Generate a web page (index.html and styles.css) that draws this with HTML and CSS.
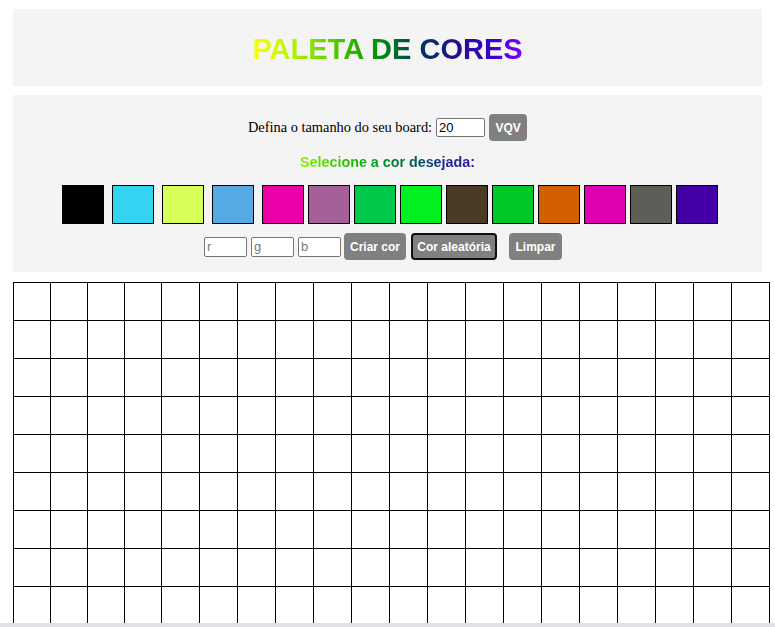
FILE: index.html
```html
<!DOCTYPE html>
<html lang="pt-BR">
<head>
<meta charset="utf-8">
<title>Paleta de Cores</title>
<link rel="stylesheet" href="styles.css">
</head>
<body>
<header class="header">
  <h1 class="title">PALETA DE CORES</h1>
</header>
<section class="controls">
  <div class="row-size">
    <label class="size-label" for="board-size">Defina o tamanho do seu board:</label>
    <input class="size-input" id="board-size" type="number" value="20">
    <button class="btn btn-vqv">VQV</button>
  </div>
  <p class="subtitle">Selecione a cor desejada:</p>
  <div class="palette">
    <div class="color wide" style="background:#000000"></div>
    <div class="color wide" style="background:#33d4f2"></div>
    <div class="color wide" style="background:#d6ff5a"></div>
    <div class="color wide" style="background:#55aae4"></div>
    <div class="color" style="background:#ec00a8"></div>
    <div class="color" style="background:#a5609a"></div>
    <div class="color" style="background:#00c84a"></div>
    <div class="color" style="background:#00f020"></div>
    <div class="color" style="background:#4a3a28"></div>
    <div class="color" style="background:#00c828"></div>
    <div class="color" style="background:#d26000"></div>
    <div class="color" style="background:#e000b4"></div>
    <div class="color" style="background:#5e5e58"></div>
    <div class="color" style="background:#4400a6"></div>
  </div>
  <div class="row-rgb">
    <input class="rgb-input" type="text" placeholder="r">
    <input class="rgb-input" type="text" placeholder="g">
    <input class="rgb-input last" type="text" placeholder="b">
    <button class="btn btn-create">Criar cor</button>
    <button class="btn btn-random">Cor aleatória</button>
    <button class="btn btn-clear">Limpar</button>
  </div>
</section>
<main class="board" id="pixel-board"></main>
<div class="hscroll"></div>
<script src="script.js"></script>
</body>
</html>
```
FILE: styles.css
```css
* { box-sizing: border-box; }
html, body { margin: 0; padding: 0; }
body {
  background: #ffffff;
  padding: 9px 13px 0 13px;
  font-family: "Liberation Sans", Arial, sans-serif;
}
.header {
  background: #f4f4f4;
  height: 77px;
  display: flex;
  align-items: center;
  justify-content: center;
}
.title {
  margin: 0;
  font-size: 29px;
  font-weight: bold;
  line-height: 32px;
  background: linear-gradient(90deg, #ffff00 0%, #c0f400 14%, #66d000 28%, #009900 45%, #006633 54%, #003366 62%, #1e1288 75%, #3a00cc 88%, #8000ff 100%);
  -webkit-background-clip: text;
  background-clip: text;
  color: transparent;
  padding-top: 2px;
}
.controls {
  margin-top: 9px;
  background: #f4f4f4;
  padding: 19px 0 12px 0;
  display: flex;
  flex-direction: column;
  align-items: center;
}
.row-size {
  display: flex;
  align-items: center;
  height: 27px;
}
.size-label {
  font-family: "Liberation Serif", "Times New Roman", serif;
  font-size: 14.4px;
  color: #000;
  margin-right: 4px;
}
.size-input {
  width: 49px;
  height: 19px;
  border: 1px solid #767676;
  border-radius: 2px;
  padding: 0 2px;
  font-family: "Liberation Sans", Arial, sans-serif;
  font-size: 13px;
  margin: 0 4px 0 0;
  background: #fff;
  -moz-appearance: textfield;
}
.size-input::-webkit-outer-spin-button,
.size-input::-webkit-inner-spin-button { -webkit-appearance: none; margin: 0; }
.btn {
  height: 27px;
  border: 0;
  border-radius: 4px;
  background: #808080;
  color: #ffffff;
  font-family: "Liberation Sans", Arial, sans-serif;
  font-weight: bold;
  font-size: 12px;
  padding: 0;
  margin: 0;
  white-space: nowrap;
  text-align: center;
}
.btn-vqv { width: 38px; }
.subtitle {
  margin: 13px 0 0 0;
  font-size: 14.3px;
  font-weight: bold;
  line-height: 17px;
  background: linear-gradient(90deg, #88f000 0%, #33c000 25%, #00a020 42%, #007a33 55%, #005a55 66%, #1a2a88 82%, #3a10a8 100%);
  -webkit-background-clip: text;
  background-clip: text;
  color: transparent;
}
.palette {
  margin-top: 14px;
  display: flex;
  gap: 4px;
  padding-left: 4px;
}
.color {
  width: 42px;
  height: 39px;
  border: 1px solid #000;
}
.color.wide { margin-right: 4px; }
.row-rgb {
  margin-top: 9px;
  display: flex;
  align-items: center;
  padding-right: 9px;
}
.rgb-input {
  width: 43px;
  height: 20px;
  border: 1px solid #767676;
  border-radius: 2px;
  padding: 0 2px;
  font-family: "Liberation Sans", Arial, sans-serif;
  font-size: 13px;
  margin-right: 4px;
  background: #fff;
}
.rgb-input.last { margin-right: 3px; }
.rgb-input::placeholder { color: #7a7a7a; }
.btn-create { width: 62px; margin-right: 5px; }
.btn-random { width: 86px; border: 2px solid #101010; margin-right: 12px; }
.btn-clear { width: 53px; }
.board {
  margin-top: 10px;
  width: 757px;
  display: grid;
  grid-template-columns: repeat(4, 37px) repeat(16, 38px);
  border-left: 1px solid #000;
  border-top: 1px solid #000;
}
.pixel {
  height: 38px;
  border-right: 1px solid #000;
  border-bottom: 1px solid #000;
  background: #fff;
}
.hscroll {
  position: fixed;
  left: 0;
  right: 0;
  bottom: 0;
  height: 4px;
  background: #e1e2e6;
}
```
FILE: script.js
```js
var board = document.getElementById('pixel-board');
for (var i = 0; i < 400; i++) {
  var cell = document.createElement('div');
  cell.className = 'pixel';
  board.appendChild(cell);
}
```
